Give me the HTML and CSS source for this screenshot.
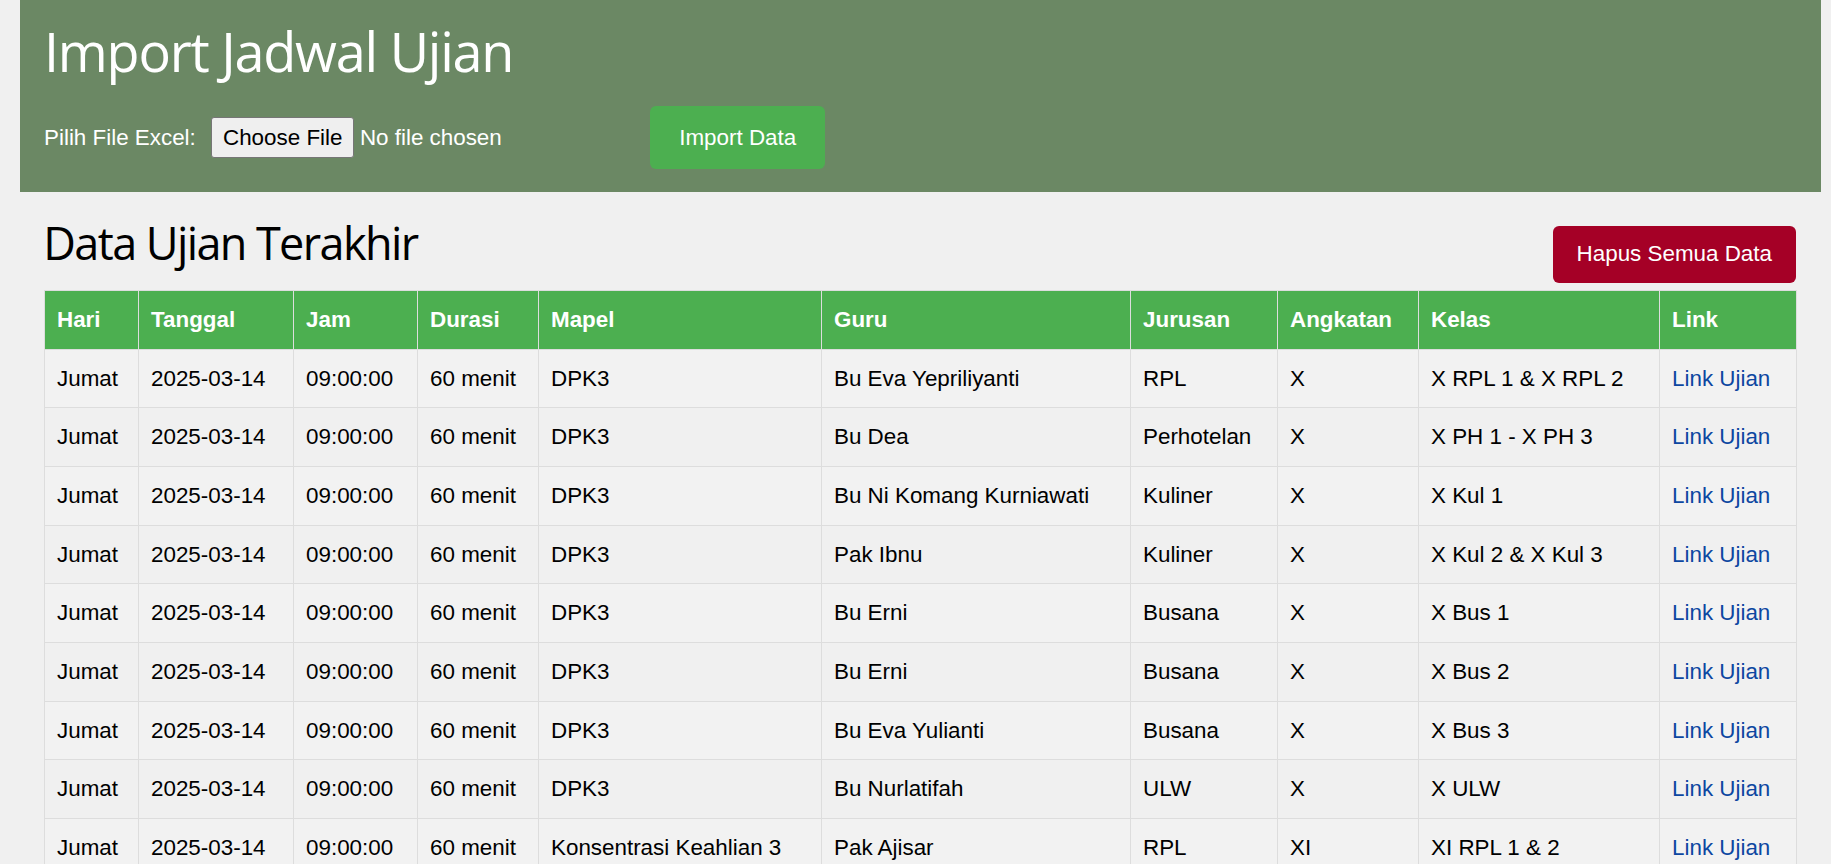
FILE: index.html
```html
<!DOCTYPE html>
<html lang="id">
<head>
<meta charset="utf-8">
<title>Import Jadwal Ujian</title>
<link rel="stylesheet" href="styles.css">
</head>
<body>
<div class="page">
  <header class="hero">
    <h1 class="hero-title">Import Jadwal Ujian</h1>
    <form class="upload-row">
      <label class="upload-label" for="file">Pilih File Excel:</label>
      <input class="file-input" id="file" type="file">
      <button class="btn btn-import" type="button">Import Data</button>
    </form>
  </header>

  <main class="content">
    <div class="section-bar">
      <h2 class="section-title">Data Ujian Terakhir</h2>
      <button class="btn btn-danger" type="button">Hapus Semua Data</button>
    </div>
    <table class="data-table">
      <colgroup>
        <col class="c-hari"><col class="c-tgl"><col class="c-jam"><col class="c-dur"><col class="c-mapel">
        <col class="c-guru"><col class="c-jur"><col class="c-ang"><col class="c-kelas"><col class="c-link">
      </colgroup>
      <thead>
        <tr><th>Hari</th><th>Tanggal</th><th>Jam</th><th>Durasi</th><th>Mapel</th><th>Guru</th><th>Jurusan</th><th>Angkatan</th><th>Kelas</th><th>Link</th></tr>
      </thead>
      <tbody>
        <tr><td>Jumat</td><td>2025-03-14</td><td>09:00:00</td><td>60 menit</td><td>DPK3</td><td>Bu Eva Yepriliyanti</td><td>RPL</td><td>X</td><td>X RPL 1 &amp; X RPL 2</td><td><a href="#">Link Ujian</a></td></tr>
        <tr><td>Jumat</td><td>2025-03-14</td><td>09:00:00</td><td>60 menit</td><td>DPK3</td><td>Bu Dea</td><td>Perhotelan</td><td>X</td><td>X PH 1 - X PH 3</td><td><a href="#">Link Ujian</a></td></tr>
        <tr><td>Jumat</td><td>2025-03-14</td><td>09:00:00</td><td>60 menit</td><td>DPK3</td><td>Bu Ni Komang Kurniawati</td><td>Kuliner</td><td>X</td><td>X Kul 1</td><td><a href="#">Link Ujian</a></td></tr>
        <tr><td>Jumat</td><td>2025-03-14</td><td>09:00:00</td><td>60 menit</td><td>DPK3</td><td>Pak Ibnu</td><td>Kuliner</td><td>X</td><td>X Kul 2 &amp; X Kul 3</td><td><a href="#">Link Ujian</a></td></tr>
        <tr><td>Jumat</td><td>2025-03-14</td><td>09:00:00</td><td>60 menit</td><td>DPK3</td><td>Bu Erni</td><td>Busana</td><td>X</td><td>X Bus 1</td><td><a href="#">Link Ujian</a></td></tr>
        <tr><td>Jumat</td><td>2025-03-14</td><td>09:00:00</td><td>60 menit</td><td>DPK3</td><td>Bu Erni</td><td>Busana</td><td>X</td><td>X Bus 2</td><td><a href="#">Link Ujian</a></td></tr>
        <tr><td>Jumat</td><td>2025-03-14</td><td>09:00:00</td><td>60 menit</td><td>DPK3</td><td>Bu Eva Yulianti</td><td>Busana</td><td>X</td><td>X Bus 3</td><td><a href="#">Link Ujian</a></td></tr>
        <tr><td>Jumat</td><td>2025-03-14</td><td>09:00:00</td><td>60 menit</td><td>DPK3</td><td>Bu Nurlatifah</td><td>ULW</td><td>X</td><td>X ULW</td><td><a href="#">Link Ujian</a></td></tr>
        <tr><td>Jumat</td><td>2025-03-14</td><td>09:00:00</td><td>60 menit</td><td>Konsentrasi Keahlian 3</td><td>Pak Ajisar</td><td>RPL</td><td>XI</td><td>XI RPL 1 &amp; 2</td><td><a href="#">Link Ujian</a></td></tr>
      </tbody>
    </table>
  </main>
</div>
</body>
</html>
```

FILE: styles.css
```css
* {
  box-sizing: border-box;
}

html,
body {
  margin: 0;
  padding: 0;
}

body {
  background: #f0f0f0;
  color: #000;
  font-family: "Liberation Sans", Arial, sans-serif;
  font-size: 22.4px;
  line-height: 25.7px;
}

.page {
  margin: 0 10px 0 20px;
}

/* ---------- header ---------- */
.hero {
  background: #6b8864;
  color: #fff;
  padding: 20.7px 24px 22.7px;
}

.hero-title {
  margin: 0;
  font-family: "Open Sans", "Noto Sans", sans-serif;
  font-weight: 400;
  font-size: 54px;
  line-height: 60px;
  letter-spacing: -1.24px;
}

.upload-row {
  display: flex;
  align-items: center;
  margin: 25.3px 0 0;
}

.upload-label {
  margin-right: 15.4px;
}

.file-input {
  width: 439px;
  font: inherit;
  color: #fff;
}

.file-input::file-selector-button {
  font: inherit;
  color: #000;
  background: #efefef;
  border: 1px solid #767676;
  border-radius: 3px;
  padding: 6.6px 10.8px;
  margin-right: 5.6px;
}

.btn {
  font: inherit;
  border: 0;
  border-radius: 6px;
  color: #fff;
  cursor: pointer;
}

.btn-import {
  background: #4caf50;
  padding: 18.6px 29px;
}

/* ---------- content ---------- */
.content {
  padding: 0 25px 40px 24px;
}

.section-bar {
  display: flex;
  justify-content: space-between;
  align-items: flex-end;
  margin-top: 28.7px;
  margin-bottom: 7px;
}

.section-title {
  margin: 0 0 17.6px -0.7px;
  font-family: "Open Sans", "Noto Sans", sans-serif;
  font-weight: 400;
  font-size: 45px;
  line-height: 45px;
  letter-spacing: -1.6px;
}

.btn-danger {
  background: #a50026;
  padding: 15.8px 24px;
}

/* ---------- table ---------- */
.data-table {
  width: 100%;
  table-layout: fixed;
  border-collapse: collapse;
}

.c-hari { width: 94px; }
.c-tgl { width: 155px; }
.c-jam { width: 124px; }
.c-dur { width: 121px; }
.c-mapel { width: 283px; }
.c-guru { width: 309px; }
.c-jur { width: 147px; }
.c-ang { width: 141px; }
.c-kelas { width: 241px; }
.c-link { width: 137px; }

.data-table th,
.data-table td {
  border: 1px solid #ddd;
  padding: 16px 12px;
  text-align: left;
  vertical-align: middle;
  white-space: nowrap;
}

.data-table th {
  background: #4caf50;
  color: #fff;
  font-weight: 700;
}

.data-table tbody tr:nth-child(odd) {
  background: #f2f2f2;
}

.data-table a {
  color: #0d47a1;
  text-decoration: none;
}
```
